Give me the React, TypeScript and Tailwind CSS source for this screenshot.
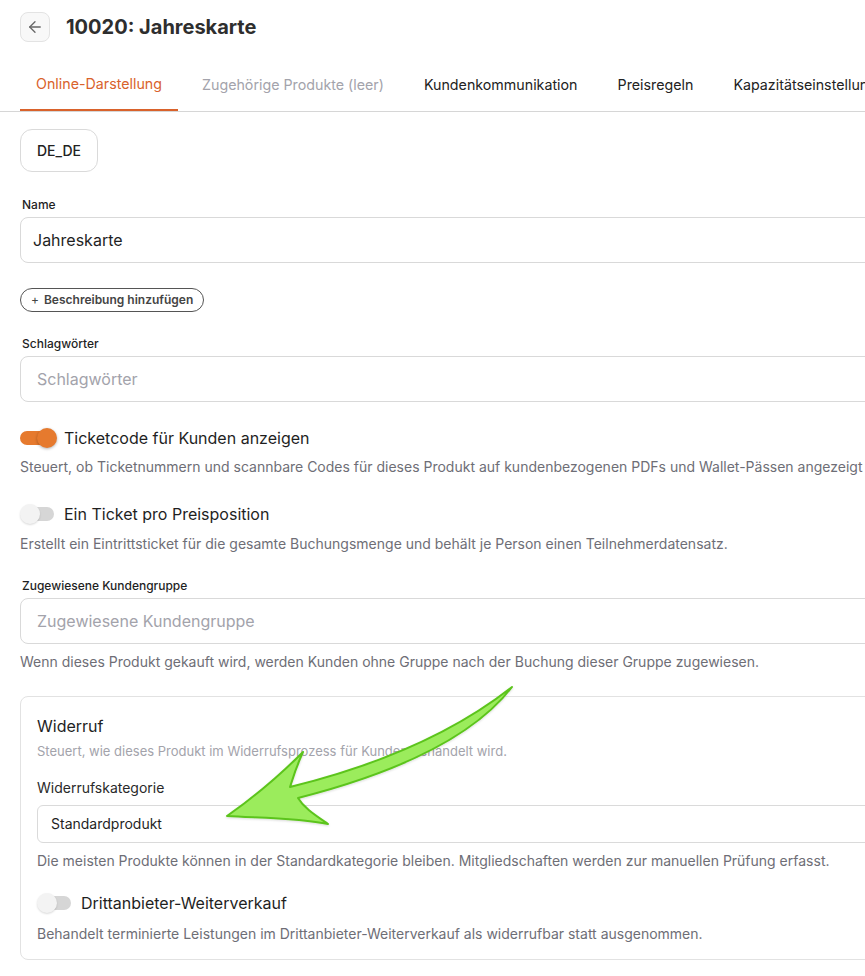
import { ArrowLeft } from "lucide-react";

const tabs = [
  { label: "Online-Darstellung", state: "active" },
  { label: "Zugehörige Produkte (leer)", state: "muted" },
  { label: "Kundenkommunikation", state: "idle" },
  { label: "Preisregeln", state: "idle" },
  { label: "Kapazitätseinstellungen", state: "idle" },
];

function Toggle({ on }: { on: boolean }) {
  return (
    <span className="relative inline-flex h-5 w-[38px] shrink-0 items-center">
      <span
        className={
          on
            ? "absolute left-0 h-[14px] w-[34px] rounded-full bg-[#e67a2e]"
            : "absolute left-[2px] h-[14px] w-[32px] rounded-full bg-[#d6d6d6]"
        }
      />
      <span
        className={
          on
            ? "absolute left-[17px] h-5 w-5 rounded-full bg-[#e67a2e] shadow-[0_1px_3px_rgba(0,0,0,0.3)]"
            : "absolute left-0 h-5 w-5 rounded-full bg-[#f3f3f3] shadow-[0_1px_2px_rgba(0,0,0,0.15)]"
        }
      />
    </span>
  );
}

function Field({ label, value, placeholder }: { label: string; value?: string; placeholder?: string }) {
  return (
    <div>
      <div className="pl-[2px] text-xs font-medium leading-4 text-[#1f1f1f]">{label}</div>
      <div className="mt-1 flex h-[46px] items-center rounded-lg border border-[#d9d9d9] bg-white">
        {value ? (
          <span className="pl-[12px] text-base text-[#1f1f1f]">{value}</span>
        ) : (
          <span className="pl-4 text-base text-[#a3a3ab]">{placeholder}</span>
        )}
      </div>
    </div>
  );
}

function SwitchRow({ on, title, hint, gap = "mt-[7px]" }: { on: boolean; title: string; hint: string; gap?: string }) {
  return (
    <div>
      <div className="flex h-6 items-center gap-[6px]">
        <Toggle on={on} />
        <span className="text-base text-[#1f1f1f]">{title}</span>
      </div>
      <p className={`${gap} whitespace-nowrap text-sm leading-5 text-[#6e6e76]`}>{hint}</p>
    </div>
  );
}

// green callout pointing at the category select
function Pointer() {
  return (
    <svg className="pointer-events-none absolute left-0 top-0" width="865" height="976" viewBox="0 0 865 976">
      <defs>
        <filter id="soft" x="-10%" y="-10%" width="120%" height="120%">
          <feDropShadow dx="0" dy="1" stdDeviation="1" floodColor="#000" floodOpacity="0.15" />
        </filter>
      </defs>
      <path
        d="M512 687 C470 720 400 760 290 787 C294 774 298 763 303 752 C280 775 250 800 227 816 C262 818 300 818 328 824 C315 815 304 808 298 798 C400 772 475 735 512 687 Z"
        fill="#9bec5c"
        stroke="#5cc41c"
        strokeWidth="2"
        strokeLinejoin="round"
        filter="url(#soft)"
      />
    </svg>
  );
}

export default function App() {
  return (
    <div className="relative h-[976px] w-full overflow-hidden bg-white font-['Inter',sans-serif]">
      <div className="w-[1100px]">
        <div className="flex items-center gap-4 pl-5 pt-3">
          <button className="flex h-[30px] w-[30px] items-center justify-center rounded-lg border border-[#e3e3e3] bg-[#f8f8f8] text-[#666]">
            <ArrowLeft size={18} strokeWidth={1.75} />
          </button>
          <h1 className="text-xl font-bold text-[#2e2e2e]">10020: Jahreskarte</h1>
        </div>

        <div className="mt-[17px] flex gap-2 border-b border-[#d6d6d6] pl-5">
          {tabs.map((t) => (
            <div
              key={t.label}
              className={
                t.state === "active"
                  ? "-mb-px flex h-[52px] items-center border-b-2 border-[#d9622b] px-4 text-[14.25px] text-[#d9622b]"
                  : t.state === "muted"
                    ? "flex h-[52px] items-center px-4 text-[14.25px] text-[#a3a3ab]"
                    : "flex h-[52px] items-center px-4 text-[14.25px] text-[#222]"
              }
            >
              {t.label}
            </div>
          ))}
        </div>

        <div className="pl-5">
          <button className="mt-[17px] flex h-[43px] w-[78px] items-center justify-center rounded-xl border border-[#dadada] text-sm font-medium text-[#222]">
            DE_DE
          </button>

          <div className="mt-[25px]">
            <Field label="Name" value="Jahreskarte" />
          </div>

          <button className="mt-[25px] flex h-6 items-center gap-[5px] rounded-full border border-[#555] px-[10px] text-xs font-semibold text-[#444]">
            <span className="font-normal">+</span>
            Beschreibung hinzufügen
          </button>

          <div className="mt-6">
            <Field label="Schlagwörter" placeholder="Schlagwörter" />
          </div>

          <div className="mt-6">
            <SwitchRow
              on
              title="Ticketcode für Kunden anzeigen"
              hint="Steuert, ob Ticketnummern und scannbare Codes für dieses Produkt auf kundenbezogenen PDFs und Wallet-Pässen angezeigt werden."
            />
          </div>

          <div className="mt-[25px]">
            <SwitchRow
              on={false}
              title="Ein Ticket pro Preisposition"
              hint="Erstellt ein Eintrittsticket für die gesamte Buchungsmenge und behält je Person einen Teilnehmerdatensatz."
              gap="mt-2"
            />
          </div>

          <div className="mt-6">
            <Field label="Zugewiesene Kundengruppe" placeholder="Zugewiesene Kundengruppe" />
            <p className="mt-2 text-sm leading-5 text-[#6e6e76]">
              Wenn dieses Produkt gekauft wird, werden Kunden ohne Gruppe nach der Buchung dieser Gruppe zugewiesen.
            </p>
          </div>

          <section className="mt-6 rounded-lg border border-[#e2e2e2] px-4 pb-[15px] pt-[17px]">
            <h2 className="text-base leading-6 text-[#1f1f1f]">Widerruf</h2>
            <p className="mt-[3px] text-[13px] leading-5 text-[#a3a3ab]">
              Steuert, wie dieses Produkt im Widerrufsprozess für Kunden behandelt wird.
            </p>
            <div className="mt-[17px] text-sm leading-5 text-[#2a2a2a]">Widerrufskategorie</div>
            <div className="mt-[7px] flex h-[38px] items-center rounded-md border border-[#dadada] pl-[13px] text-sm text-[#1f1f1f]">
              Standardprodukt
            </div>
            <p className="mt-2 text-sm leading-5 text-[#6e6e76]">
              Die meisten Produkte können in der Standardkategorie bleiben. Mitgliedschaften werden zur manuellen Prüfung erfasst.
            </p>
            <div className="mt-[20px]">
              <SwitchRow
                on={false}
                title="Drittanbieter-Weiterverkauf"
                hint="Behandelt terminierte Leistungen im Drittanbieter-Weiterverkauf als widerrufbar statt ausgenommen."
                gap="mt-[9px]"
              />
            </div>
          </section>
        </div>
      </div>
      <Pointer />
    </div>
  );
}
